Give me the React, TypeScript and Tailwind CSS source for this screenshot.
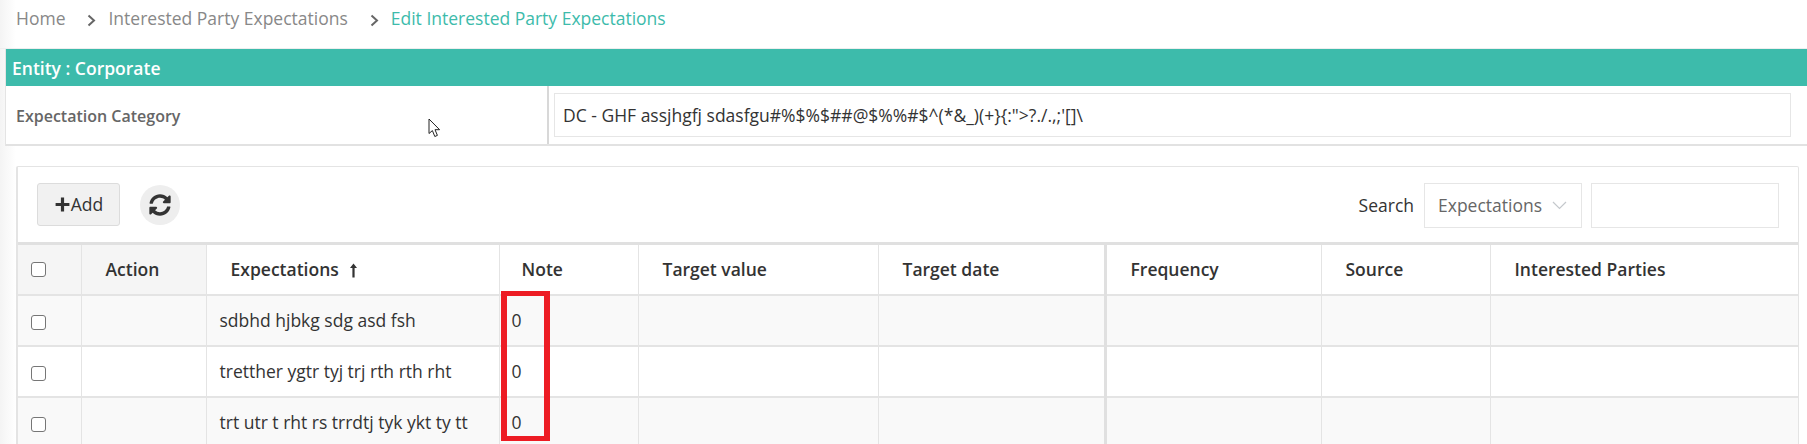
import React from "react";

function Cb() {
  return <span className="block h-[15px] w-[15px] rounded-[3px] border border-[#767676] bg-white" />;
}

const cols = [
  { w: "w-[63px]" },
  { w: "w-[125px]", label: "Action" },
  { w: "w-[293px]", label: "Expectations" },
  { w: "w-[139px]", label: "Note" },
  { w: "w-[240px]", label: "Target value" },
  { w: "w-[227px]", label: "Target date" },
  { w: "w-[216px]", label: "Frequency" },
  { w: "w-[169px]", label: "Source" },
  { w: "w-[308px]", label: "Interested Parties" },
];

const rows = [
  { text: "sdbhd hjbkg sdg asd fsh", bg: "bg-[#f9f9f9]" },
  { text: "tretther ygtr tyj trj rth rth rht", bg: "bg-white" },
  { text: "trt utr t rht rs trrdtj tyk ykt ty tt", bg: "bg-[#f9f9f9]" },
];

function Chevron() {
  return (
    <svg width="9" height="13" viewBox="0 0 9 13" className="block">
      <path d="M1.5 1.5 L7 6.5 L1.5 11.5" fill="none" stroke="#666" strokeWidth="2" />
    </svg>
  );
}

export default function App() {
  return (
    <div className="relative h-[444px] w-[1807px] overflow-hidden bg-[linear-gradient(90deg,#f4f4f4,#ffffff_16px)] font-['Open_Sans',sans-serif] text-[17.5px] text-[#333]">
      <div className="flex h-[49px] items-start border-b border-[#eeeeee] pl-[16px] pt-[5px] text-[#888]">
        <span>Home</span>
        <span className="ml-[22px] mr-[12px] mt-[9px]"><Chevron /></span>
        <span>Interested Party Expectations</span>
        <span className="ml-[22px] mr-[12px] mt-[9px]"><Chevron /></span>
        <span className="text-[#3dbbab]">Edit Interested Party Expectations</span>
      </div>

      <div className="ml-[5px] border-l border-[#e4e4e4] bg-white">
        <div className="flex h-[37px] items-center bg-[#3dbbab] pl-[6px] pt-[1px] font-semibold text-white">Entity : Corporate</div>
        <div className="flex h-[60px] border-b-2 border-[#e2e2e2]">
          <div className="flex w-[543px] items-center border-r-2 border-[#d8d8d8] pl-[10px] pt-[1px] text-[16px] font-semibold text-[#666]">
            Expectation Category
          </div>
          <div className="flex-1 pl-[5px] pr-[16px] pt-[7px]">
            <div className="flex h-[44px] items-center border border-[#e6e6e6] px-[8px]">
              {"DC - GHF assjhgfj sdasfgu#%$%$##@$%%#$^(*&_)(+}{:\">?./.,;'[]\\"}
            </div>
          </div>
        </div>
      </div>

      <div className="ml-[16px] mr-[8px] mt-[20px] rounded-[2px] border border-l-2 border-[#e4e4e4] bg-white">
        <div className="flex h-[75px] items-start justify-between pl-[19px] pr-[19px] pt-[16px]">
          <div className="flex items-center gap-[20px]">
            <button className="flex h-[43px] w-[83px] items-center justify-center rounded-[3px] border border-[#dcdcdc] bg-[#f1f1f1] text-[#333]">
              <svg width="17" height="17" viewBox="0 0 16 16">
                <path d="M6.5 1.5h3v5h5v3h-5v5h-3v-5h-5v-3h5z" fill="#333" />
              </svg>
              Add
            </button>
            <span className="flex h-[40px] w-[40px] items-center justify-center rounded-full bg-[#eeeeee]">
              <svg width="22" height="22" viewBox="0 0 512 512" fill="#333">
                <path d="M370.72 133.28C339.458 104.008 298.888 87.962 255.848 88c-77.458.068-144.328 53.178-162.791 126.85-1.344 5.363-6.122 9.15-11.651 9.15H24.103c-7.498 0-13.194-6.807-11.807-14.176C33.933 94.924 134.813 8 256 8c66.448 0 126.791 26.136 171.315 68.685L463.03 40.97C478.149 25.851 504 36.559 504 57.941V192c0 13.255-10.745 24-24 24H345.941c-21.382 0-32.09-25.851-16.971-40.971l41.75-41.749zM32 296h134.059c21.382 0 32.09 25.851 16.971 40.971l-41.75 41.75c31.262 29.273 71.835 45.319 114.876 45.28 77.418-.07 144.315-53.144 162.787-126.849 1.344-5.363 6.122-9.15 11.651-9.15h57.304c7.498 0 13.194 6.807 11.807 14.176C478.067 417.076 377.187 504 256 504c-66.448 0-126.791-26.136-171.315-68.685L48.97 471.03C33.851 486.149 8 475.441 8 454.059V320c0-13.255 10.745-24 24-24z" />
              </svg>
            </span>
          </div>
          <div className="flex items-center">
            <span className="mr-[10px]">Search</span>
            <div className="flex h-[45px] w-[158px] items-center justify-between border border-[#e6e6e6] pl-[13px] pr-[14px] text-[#666]">
              Expectations
              <svg width="15" height="9" viewBox="0 0 15 9"><path d="M1 1 L7.5 7.5 L14 1" fill="none" stroke="#c4c8cc" strokeWidth="1.2" /></svg>
            </div>
            <div className="ml-[9px] h-[45px] w-[188px] border border-[#e6e6e6]" />
          </div>
        </div>

        <table className="w-full table-fixed border-collapse border-t-[3px] border-[#e0e0e0]">
          <thead>
            <tr className="h-[51px]">
              {cols.map((c, i) => (
                <th
                  key={i}
                  className={`${c.w} border-b-2 border-[#e4e4e4] text-left font-semibold ${i < 2 ? "bg-[#f5f5f5]" : "bg-white"} ${i === 5 ? "border-r-[3px] border-r-[#e0e0e0]" : i === 8 ? "" : "border-r border-r-[#e4e4e4]"} ${i === 0 ? "pl-[13px]" : i === 3 ? "pl-[22px]" : "pl-[24px]"}`}
                >
                  {i === 0 ? <Cb /> : c.label}
                  {c.label === "Expectations" && (
                    <svg width="9" height="15" viewBox="0 0 9 15" className="ml-[10px] inline-block align-[-2px]">
                      <path d="M4.5 0.5 L8 5 H5.6 V14.5 H3.4 V5 H1 Z" fill="#333" />
                    </svg>
                  )}
                </th>
              ))}
            </tr>
          </thead>
          <tbody>
            {rows.map((r, ri) => (
              <tr key={ri} className={`h-[51px] ${r.bg}`}>
                {cols.map((c, i) => (
                  <td
                    key={i}
                    className={`border-b-2 border-[#e4e4e4] ${i === 5 ? "border-r-[3px] border-r-[#e0e0e0]" : i === 8 ? "" : "border-r border-r-[#e4e4e4]"} ${i === 3 ? "pl-[12px]" : "pl-[13px]"}`}
                  >
                    {i === 0 ? <span className="mt-[4px] block"><Cb /></span> : i === 2 ? r.text : i === 3 ? "0" : null}
                  </td>
                ))}
              </tr>
            ))}
          </tbody>
        </table>
      </div>

      <div className="absolute left-[501px] top-[291px] h-[150px] w-[49px] border-x-[6px] border-y-[5px] border-[#ed1c24]" />

      <svg className="absolute left-[428px] top-[118px]" width="14" height="21" viewBox="0 0 14 21">
        <path d="M1 1 V15.5 L4.4 12.6 L6.8 18.5 L9.4 17.4 L7 11.7 H11.6 Z" fill="#fff" stroke="#222" strokeWidth="1" />
      </svg>
    </div>
  );
}
